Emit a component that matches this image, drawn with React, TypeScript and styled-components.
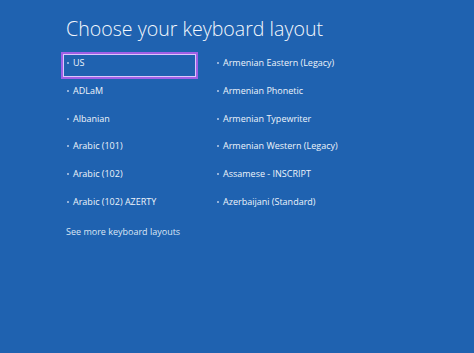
import styled, { createGlobalStyle } from 'styled-components';

const GlobalStyle = createGlobalStyle`
	html, body {
		margin: 0;
		padding: 0;
		background: #1f62b0;
	}
	body {
		font-family: 'Open Sans', 'Noto Sans', sans-serif;
	}
`;

const leftLayouts = ['US', 'ADLaM', 'Albanian', 'Arabic (101)', 'Arabic (102)', 'Arabic (102) AZERTY'];
const rightLayouts = [
	'Armenian Eastern (Legacy)',
	'Armenian Phonetic',
	'Armenian Typewriter',
	'Armenian Western (Legacy)',
	'Assamese - INSCRIPT',
	'Azerbaijani (Standard)',
];

const Screen = styled.div`
	width: 474px;
	height: 353px;
	background: #1f62b0;
	color: #eef4fb;
	padding: 14px 0 0 61px;
	box-sizing: border-box;
	overflow: hidden;
`;

const Title = styled.h1`
	margin: 0 0 8px 5px;
	font-size: 19.6px;
	font-weight: 300;
	color: #f4f8fd;
	line-height: 30px;
`;

const Columns = styled.div`
	display: grid;
	grid-template-columns: 150px 200px;
	grid-auto-flow: column;
	grid-template-rows: repeat(6, 27.8px);
`;

const Item = styled.div<{ $focused?: boolean }>`
	box-sizing: border-box;
	width: ${({ $focused }) => ($focused ? '137px' : 'auto')};
	height: 27px;
	padding: 2px 0 0 4px;
	font-size: 9px;
	line-height: 13px;
	display: flex;
	align-items: flex-start;
	gap: 4px;
	border: 2px solid ${({ $focused }) => ($focused ? '#a05fe6' : 'transparent')};
	box-shadow: ${({ $focused }) => ($focused ? 'inset 0 0 0 1px #dcc6fb' : 'none')};
	white-space: nowrap;
`;

const Bullet = styled.span`
	width: 2px;
	height: 2px;
	margin-top: 6px;
	border-radius: 50%;
	background: #b9cde9;
`;

const MoreLink = styled.div`
	margin: 6px 0 0 5px;
	font-size: 9px;
	color: #dbe6f5;
`;

export default function App() {
	return (
		<>
			<GlobalStyle />
			<Screen>
				<Title>Choose your keyboard layout</Title>
				<Columns>
					{leftLayouts.map((name, i) => (
						<Item key={name} $focused={i === 0}>
							<Bullet />
							{name}
						</Item>
					))}
					{rightLayouts.map((name) => (
						<Item key={name}>
							<Bullet />
							{name}
						</Item>
					))}
				</Columns>
				<MoreLink>See more keyboard layouts</MoreLink>
			</Screen>
		</>
	);
}
